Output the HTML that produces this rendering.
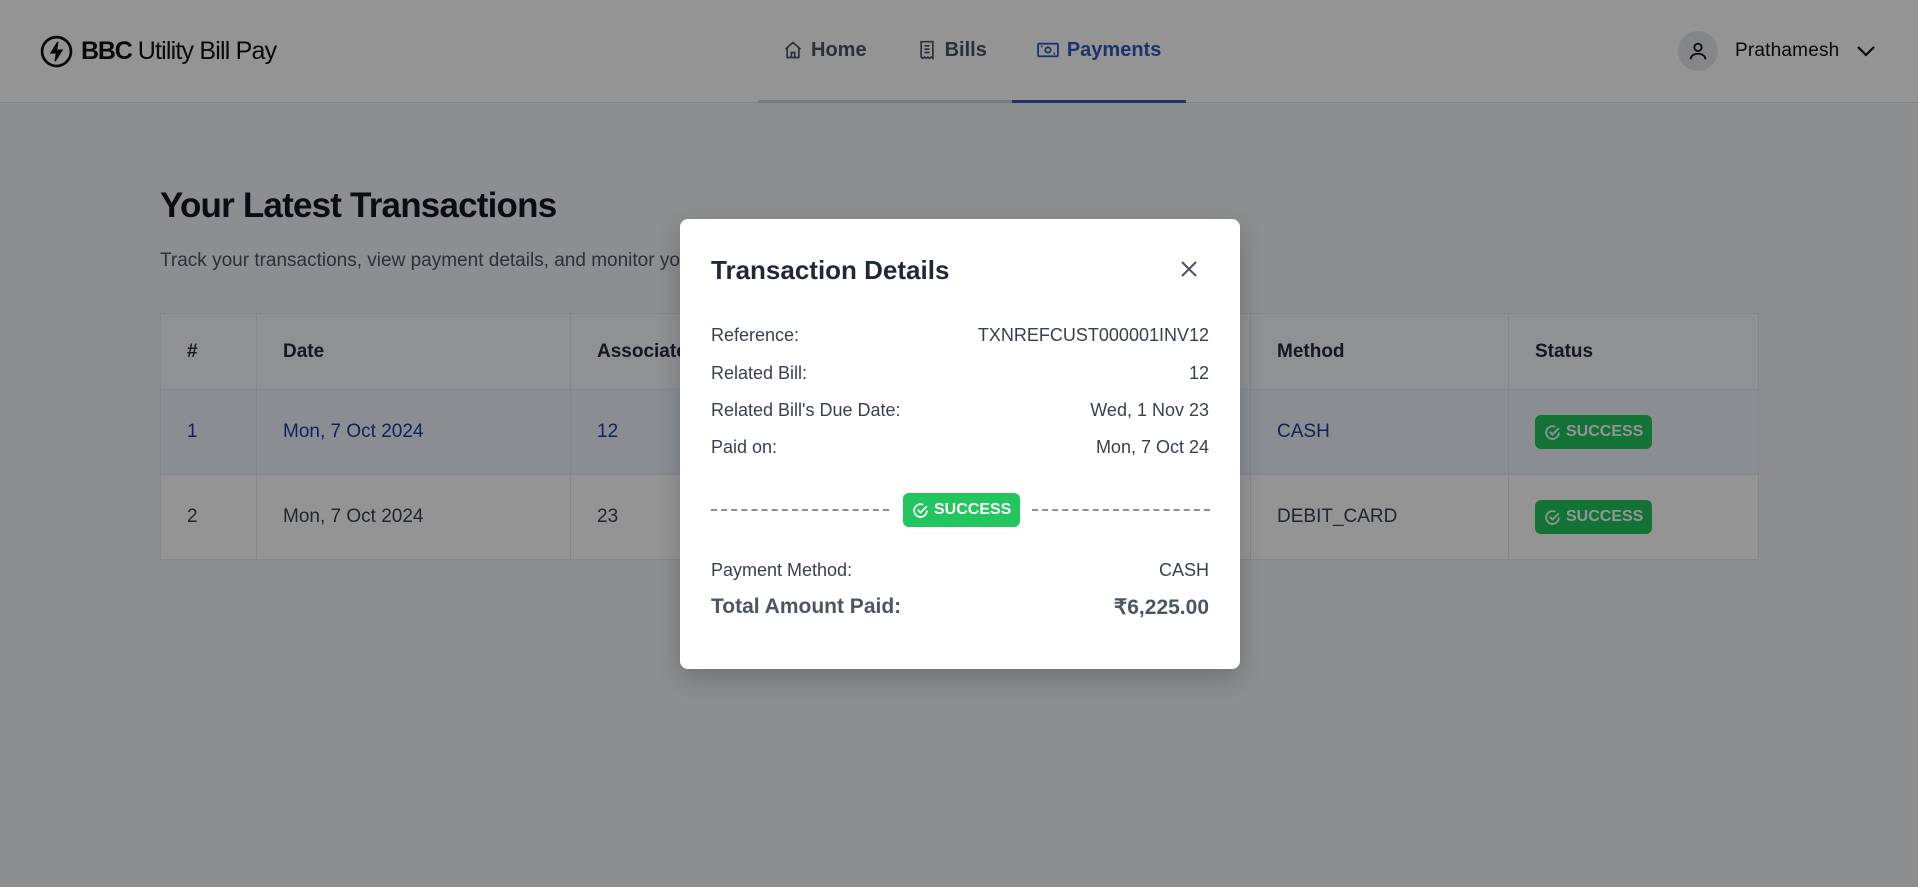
<!DOCTYPE html>
<html><head><meta charset="utf-8">
<style>
*{box-sizing:border-box;margin:0;padding:0}
html,body{width:1918px;height:887px;overflow:hidden}
body{font-family:"Liberation Sans",sans-serif;background:#f3f4f6;color:#374151;position:relative}
.nav{position:absolute;left:0;top:0;width:1918px;height:103px;background:#fff;border-bottom:1px solid #e5e7eb}
.logo{position:absolute;left:40px;top:35px;display:flex;align-items:center;gap:8px;font-size:25px;color:#111;letter-spacing:-0.8px}
.logo b{font-weight:700;letter-spacing:-1.2px}
.links{position:absolute;left:758px;top:0;height:103px;display:flex}
.link{display:flex;align-items:center;gap:8px;font-size:20px;font-weight:700;color:#4b5563;height:103px;padding:0 25px;border-bottom:3px solid #d1d5db}
.link.act{color:#2d5bb9;border-bottom-color:#2d5bb9}
.user{position:absolute;left:1678px;top:31px;display:flex;align-items:center;gap:17px;font-size:19px;font-weight:400;color:#111;letter-spacing:0.2px}
.av{width:40px;height:40px;border-radius:50%;background:#e5e7eb;display:flex;align-items:center;justify-content:center}
h1{position:absolute;left:160px;top:186px;font-size:35px;font-weight:700;color:#111827;letter-spacing:-0.8px}
.sub{position:absolute;left:160px;top:250px;font-size:19px;color:#4b5563}
table{position:absolute;left:160px;top:313px;width:1599px;border-collapse:collapse;background:#fff;font-size:19px}
td,th{border:1px solid #e5e7eb;text-align:left;padding:0 0 0 26px}
th{height:76px;font-weight:700;color:#1f2937;background:#f9fafb}
td{height:85px;color:#374151}
tr.hi td{background:#eef4fb;color:#1e3a9f}
.badge{display:inline-flex;align-items:center;gap:5px;background:#22c55e;color:#fff;font-weight:700;font-size:16px;padding:0 9px;height:34px;border-radius:6px}
.ov{position:absolute;left:0;top:0;width:1918px;height:887px;background:rgba(0,0,0,0.42)}
.modal{position:absolute;left:680px;top:219px;width:560px;height:450px;background:#fff;border-radius:8px;box-shadow:0 10px 25px rgba(0,0,0,.2)}
.mt{position:absolute;left:31px;top:36px;font-size:26px;font-weight:700;color:#1f2937}
.x{position:absolute;left:499px;top:40px}
.row{position:absolute;left:31px;width:498px;display:flex;justify-content:space-between;font-size:18px;color:#374151}
.dash{position:absolute;top:290px;height:0;border-top:2px dashed #8a8f98}
.mb{position:absolute;left:223px;top:274px;height:34px}
.tot{font-size:21px;font-weight:700;color:#4b5563}
</style></head><body>
<div class="nav">
 <div class="logo"><svg width="33" height="33" viewBox="0 0 24 24" fill="none" stroke="#111" stroke-width="2"><circle cx="12" cy="12" r="10.5"/><path d="M13 5l-5 8h4l-1 6 5-8h-4z" fill="#111" stroke-width="1"/></svg><span><b>BBC</b> Utility Bill Pay</span></div>
 <div class="links">
  <div class="link"><svg width="20" height="20" viewBox="0 0 24 24" fill="none" stroke="#4b5563" stroke-width="2"><path d="M3 11l9-8 9 8M5 9v12h14V9M10 21v-6h4v6"/></svg>Home</div>
  <div class="link"><svg width="20" height="22" viewBox="0 0 24 24" fill="none" stroke="#4b5563" stroke-width="2"><path d="M5 2h14v20l-2-1.5-2 1.5-2-1.5-2 1.5-2-1.5-2 1.5-2-1.5zM9 7h6M9 11h6M9 15h6"/></svg>Bills</div>
  <div class="link act"><svg width="22" height="18" viewBox="0 0 24 20" fill="none" stroke="#2d5bb9" stroke-width="2"><rect x="1" y="3" width="22" height="14" rx="1"/><circle cx="12" cy="10" r="3"/><path d="M4 6h2M18 14h2"/></svg>Payments</div>
 </div>
 <div class="user"><div class="av"><svg width="22" height="22" viewBox="0 0 24 24" fill="none" stroke="#111" stroke-width="2"><circle cx="12" cy="8" r="4"/><path d="M4 21c0-4 4-6 8-6s8 2 8 6"/></svg></div>Prathamesh<svg width="20" height="14" viewBox="0 0 20 14" fill="none" stroke="#111" stroke-width="2.2"><path d="M2 3l8 8 8-8"/></svg></div>
</div>
<h1>Your Latest Transactions</h1>
<div class="sub">Track your transactions, view payment details, and monitor your payments</div>
<table>
<tr><th style="width:96px">#</th><th style="width:314px">Date</th><th style="width:680px">Associated Bill</th><th style="width:258px">Method</th><th>Status</th></tr>
<tr class="hi"><td>1</td><td>Mon, 7 Oct 2024</td><td>12</td><td>CASH</td><td><span class="badge"><svg width="17" height="17" viewBox="0 0 24 24" fill="none" stroke="#fff" stroke-width="2.5"><path d="M21 12a9 9 0 1 1-5-8"/><path d="M8 11l4 4 9-9"/></svg>SUCCESS</span></td></tr>
<tr><td>2</td><td>Mon, 7 Oct 2024</td><td>23</td><td>DEBIT_CARD</td><td><span class="badge"><svg width="17" height="17" viewBox="0 0 24 24" fill="none" stroke="#fff" stroke-width="2.5"><path d="M21 12a9 9 0 1 1-5-8"/><path d="M8 11l4 4 9-9"/></svg>SUCCESS</span></td></tr>
</table>
<div class="ov"></div>
<div class="modal">
 <div class="mt">Transaction Details</div>
 <svg class="x" width="20" height="20" viewBox="0 0 20 20" stroke="#4b5563" stroke-width="2"><path d="M3 3l14 14M17 3L3 17"/></svg>
 <div class="row" style="top:106px"><span>Reference:</span><span>TXNREFCUST000001INV12</span></div>
 <div class="row" style="top:144px"><span>Related Bill:</span><span>12</span></div>
 <div class="row" style="top:181px"><span>Related Bill's Due Date:</span><span>Wed, 1 Nov 23</span></div>
 <div class="row" style="top:218px"><span>Paid on:</span><span>Mon, 7 Oct 24</span></div>
 <div class="dash" style="left:31px;width:178px"></div>
 <div class="dash" style="left:352px;width:178px"></div>
 <span class="badge mb"><svg width="17" height="17" viewBox="0 0 24 24" fill="none" stroke="#fff" stroke-width="2.5"><path d="M21 12a9 9 0 1 1-5-8"/><path d="M8 11l4 4 9-9"/></svg>SUCCESS</span>
 <div class="row" style="top:341px"><span>Payment Method:</span><span>CASH</span></div>
 <div class="row tot" style="top:376px"><span>Total Amount Paid:</span><span>₹6,225.00</span></div>
</div>
</body></html>
